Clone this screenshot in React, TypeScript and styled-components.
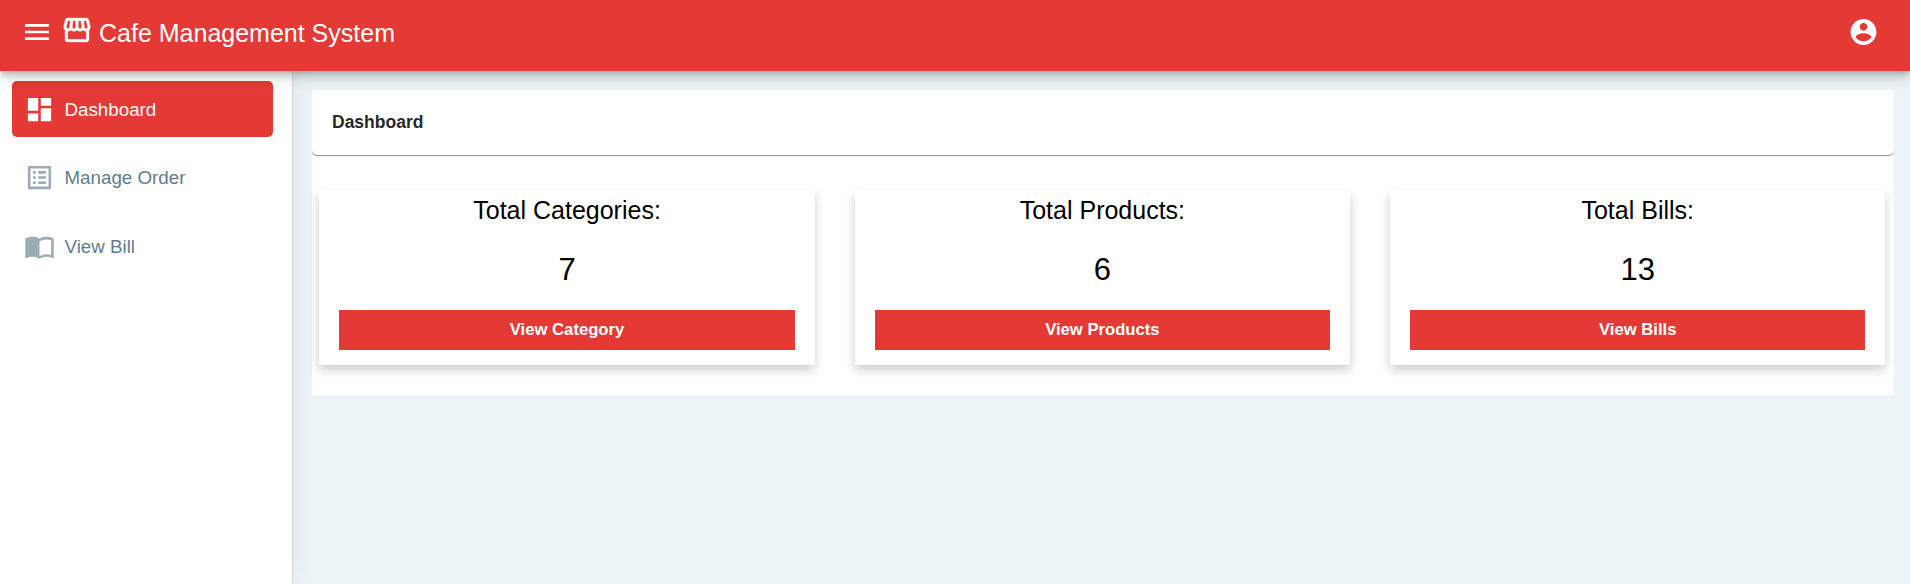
import React from "react";
import styled, { createGlobalStyle } from "styled-components";
import {
  MdDashboard,
  MdImportContacts,
  MdListAlt,
  MdMenu,
  MdOutlineStorefront,
} from "react-icons/md";

const red = "#e53935";

const GlobalStyle = createGlobalStyle`
  *, *::before, *::after { box-sizing: border-box; }
  body {
    margin: 0;
    background: #ecf4f8;
    color: #000;
    font-family: "Liberation Sans", Arial, sans-serif;
  }
`;

const Shell = styled.div`
  display: flex;
  flex-direction: column;
  height: 100vh;
  overflow: hidden;
`;

const Toolbar = styled.header`
  position: relative;
  z-index: 3;
  flex: none;
  display: flex;
  align-items: flex-start;
  height: 71px;
  padding: 16px 31px 0 21px;
  background: ${red};
  color: #fff;
  box-shadow: 0 3.75px 6.25px -1.25px rgba(0, 0, 0, 0.2),
    0 7.5px 12.5px rgba(0, 0, 0, 0.1), 0 1.25px 22.5px rgba(0, 0, 0, 0.08);
  svg { display: block; flex: none; width: 32px; height: 32px; }
`;

const Brand = styled.div`
  display: flex;
  align-items: flex-start;
  margin-left: 8px;
  svg { margin-top: -2px; }
  path:not([fill="none"]) { stroke: currentColor; stroke-width: 0.25px; }
`;

const BrandName = styled.h1`
  margin: 3px 0 0 6px;
  font-size: 25px;
  font-weight: 400;
  line-height: 28px;
`;

const AccountButton = styled.div`
  margin-left: auto;
  svg { width: 31px; height: 32px; }
`;

const Body = styled.div`
  flex: 1;
  display: flex;
  min-height: 0;
`;

const Sidebar = styled.nav`
  position: relative;
  z-index: 1;
  flex: none;
  display: flex;
  flex-direction: column;
  gap: 12.5px;
  width: 292px;
  padding: 10px 19px 0 12px;
  background: #fff;
  box-shadow: 1px 0 25px rgba(0, 0, 0, 0.07), 1px 0 1px rgba(0, 0, 0, 0.08);
`;

const NavItem = styled.a<{ $active?: boolean }>`
  display: flex;
  align-items: center;
  gap: 9.5px;
  height: 56px;
  padding-left: 12px;
  border-radius: 5px;
  background: ${(p) => (p.$active ? red : "transparent")};
  color: ${(p) => (p.$active ? "#fff" : "#607d8b")};
  font-size: 18.75px;
  line-height: 24px;
  svg {
    width: 31px;
    height: 31px;
    color: ${(p) => (p.$active ? "#fff" : "#99abb4")};
  }
  span { padding-top: 1px; }
`;

const Main = styled.main`
  flex: 1;
  padding: 19px 16px 0 20px;
`;

const Panel = styled.section`
  height: 305px;
  background: #fff;
`;

const PageTitle = styled.h2`
  display: flex;
  align-items: center;
  height: 65px;
  margin: 0;
  padding-left: 20px;
  border-radius: 5px;
  color: rgba(0, 0, 0, 0.87);
  font-size: 17.5px;
  box-shadow: 0 1px 1px rgba(0, 0, 0, 0.46);
  clip-path: inset(0 0 -4px 0);
`;

const CardGrid = styled.div`
  display: grid;
  grid-template-columns: repeat(3, 1fr);
  column-gap: 40px;
  padding: 35px 8.6px 0 7.4px;
`;

const Card = styled.article`
  height: 175px;
  padding: 0 20px;
  text-align: center;
  background: #fff;
  box-shadow: 0 5px 10px rgba(0, 0, 0, 0.2);
`;

const CardTitle = styled.div`
  padding-top: 5px;
  font-size: 25px;
  line-height: 30px;
`;

const CardCount = styled.div`
  padding-top: 27px;
  font-size: 31px;
  line-height: 36px;
`;

const CardButton = styled.button`
  display: block;
  width: 100%;
  height: 40px;
  margin-top: 22px;
  padding: 0;
  border: 0;
  background: ${red};
  color: #fff;
  font: bold 16.67px "Liberation Sans", Arial, sans-serif;
`;

const AccountIcon = () => (
  <svg viewBox="0 0 24 24" fill="currentColor">
    <path d="M12 2C6.48 2 2 6.48 2 12s4.48 10 10 10 10-4.48 10-10S17.52 2 12 2zm0 3c1.66 0 3 1.34 3 3s-1.34 3-3 3-3-1.34-3-3 1.34-3 3-3zm0 14.2c-2.5 0-4.71-1.28-6-3.22.03-1.99 4-3.08 6-3.08 1.99 0 5.97 1.09 6 3.08-1.29 1.94-3.5 3.22-6 3.22z" />
  </svg>
);

const navItems = [
  { label: "Dashboard", Icon: MdDashboard, active: true },
  { label: "Manage Order", Icon: MdListAlt, active: false },
  { label: "View Bill", Icon: MdImportContacts, active: false },
];

const totals = [
  { title: "Total Categories:", count: 7, action: "View Category" },
  { title: "Total Products:", count: 6, action: "View Products" },
  { title: "Total Bills:", count: 13, action: "View Bills" },
];

export default function App() {
  return (
    <Shell>
      <GlobalStyle />
      <Toolbar>
        <MdMenu />
        <Brand>
          <MdOutlineStorefront stroke="none" />
          <BrandName>Cafe Management System</BrandName>
        </Brand>
        <AccountButton>
          <AccountIcon />
        </AccountButton>
      </Toolbar>
      <Body>
        <Sidebar>
          {navItems.map(({ label, Icon, active }) => (
            <NavItem key={label} $active={active}>
              <Icon />
              <span>{label}</span>
            </NavItem>
          ))}
        </Sidebar>
        <Main>
          <Panel>
            <PageTitle>Dashboard</PageTitle>
            <CardGrid>
              {totals.map((t) => (
                <Card key={t.title}>
                  <CardTitle>{t.title}</CardTitle>
                  <CardCount>{t.count}</CardCount>
                  <CardButton>{t.action}</CardButton>
                </Card>
              ))}
            </CardGrid>
          </Panel>
        </Main>
      </Body>
    </Shell>
  );
}
